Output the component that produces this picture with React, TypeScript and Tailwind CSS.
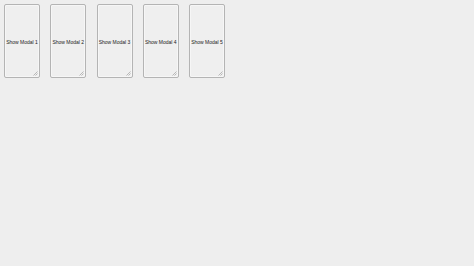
import React from "react";

function Grip() {
  return (
    <svg className="absolute right-[1px] bottom-[1px]" width="5" height="5" viewBox="0 0 5 5">
      <line x1="0.5" y1="4.5" x2="4.5" y2="0.5" stroke="#a0a0a0" strokeWidth="0.7" />
      <line x1="2.5" y1="4.5" x2="4.5" y2="2.5" stroke="#a0a0a0" strokeWidth="0.7" />
    </svg>
  );
}

export default function App() {
  const items = [1, 2, 3, 4, 5];
  return (
    <div className="w-[474px] h-[266px] bg-[#eeeeee] overflow-hidden" style={{ fontFamily: '"Liberation Sans", Arial, sans-serif' }}>
      <div className="flex gap-[10.25px] pl-[4px] pt-[4px]">
        {items.map((i) => (
          <div
            key={i}
            className="relative w-[36px] h-[74px] border border-[#b4b4b4] rounded-[2px] bg-[#efefef] flex items-center justify-center pt-[2px] shadow-[inset_0_0_0_1px_#f6f6f6]"
          >
            <span className="text-[5px] leading-none text-[#222] whitespace-nowrap">Show Modal {i}</span>
            <Grip />
          </div>
        ))}
      </div>
    </div>
  );
}
